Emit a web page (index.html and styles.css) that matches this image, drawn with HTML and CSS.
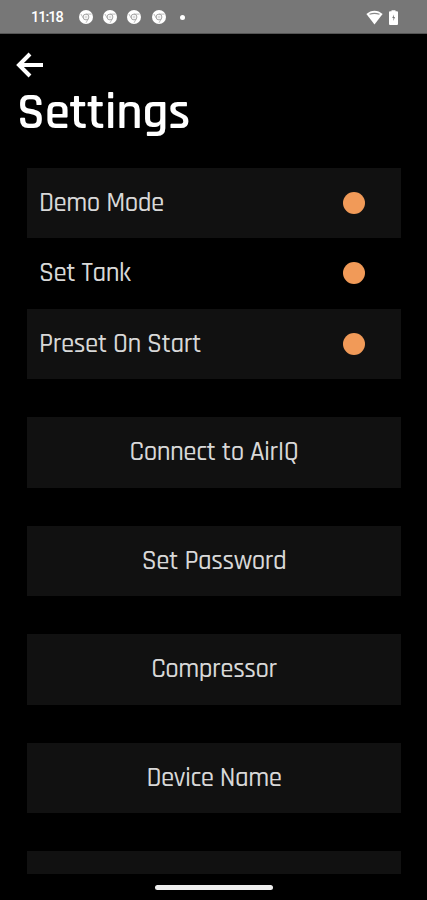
FILE: index.html
```
<!DOCTYPE html>
<html lang="en">
<head>
    <meta charset="UTF-8">
    <title>Settings</title>
    <meta name="viewport" content="width=device-width, initial-scale=1.0">
    <link rel="stylesheet" href="styles.css">
</head>
<body>
    <svg class="defs" width="0" height="0" aria-hidden="true">
        <symbol id="chrome" viewBox="0 0 14 14">
            <circle cx="7" cy="7" r="7" fill="#fff"/>
            <circle cx="7" cy="7" r="2.9" fill="none" stroke="#999" stroke-width=".9"/>
            <path d="M7 4.1h5.5M4.5 8.5L1.9 4M9.5 8.5L7 12.8" fill="none" stroke="#aaa" stroke-width=".8"/>
            <circle cx="7" cy="7" r="1.5" fill="#ddd"/>
        </symbol>
    </svg>
    <div class="status-bar">
        <span class="time">11:18</span>
        <div class="notifications">
            <svg width="14" height="14"><use href="#chrome"/></svg>
            <svg width="14" height="14"><use href="#chrome"/></svg>
            <svg width="14" height="14"><use href="#chrome"/></svg>
            <svg width="14" height="14"><use href="#chrome"/></svg>
            <span class="more"></span>
        </div>
        <div class="system-icons">
            <svg width="17" height="15" viewBox="0 0 17 15">
                <path d="M.4 4C5 -.5 12 -.5 16.6 4L8.5 14.5z" fill="#fff"/>
                <path d="M3.5 4.3Q8.5 2.5 13.5 4.3" fill="none" stroke="#888" stroke-width="1.1"/>
            </svg>
            <svg width="9" height="15" viewBox="0 0 9 15">
                <path d="M2.5 1.3V.3h4v1H8q1 0 1 1V14q0 1-1 1H1q-1 0-1-1V2.3q0-1 1-1z" fill="#fff"/>
                <path d="M5 4.5L3.2 8h1.2v3L6 7H4.8z" fill="#777"/>
            </svg>
        </div>
    </div>

    <header class="header">
        <button class="back" aria-label="Back">
            <svg width="28" height="26" viewBox="0 0 28 26" fill="none" stroke="#fff" stroke-width="4">
                <path d="M27 13H3M14 2L3 13l11 11"/>
            </svg>
        </button>
        <h1>Settings</h1>
    </header>

    <main class="content">
        <div class="options">
            <div class="option"><span>Demo Mode</span><span class="dot"></span></div>
            <div class="option"><span>Set Tank</span><span class="dot"></span></div>
            <div class="option"><span>Preset On Start</span><span class="dot"></span></div>
        </div>
        <button class="action">Connect to AirIQ</button>
        <button class="action">Set Password</button>
        <button class="action">Compressor</button>
        <button class="action">Device Name</button>
        <button class="action" aria-label="More"></button>
    </main>

    <footer class="nav-bar"><span class="handle"></span></footer>
</body>
</html>
```
FILE: styles.css
```
:root {
    --bg-color: #000;
    --panel-color: #111;
    --text-color: #d8d8d8;
    --accent-color: #f19a58;
}

* {
    box-sizing: border-box;
}

body {
    margin: 0;
    height: 900px;
    display: flex;
    flex-direction: column;
    overflow: hidden;
    background-color: var(--bg-color);
    color: var(--text-color);
    font-family: Rajdhani, Roboto, sans-serif;
}

.defs {
    display: none;
}

.status-bar {
    flex: none;
    display: flex;
    align-items: center;
    height: 34px;
    padding: 1px 29px 0 31px;
    background-color: #777;
    border-bottom: 1px solid #555;
    color: #fff;
}

.time {
    width: 48px;
    font-family: Roboto, sans-serif;
    font-size: 14.5px;
    font-weight: 500;
    letter-spacing: -1px;
}

.notifications {
    display: flex;
    align-items: center;
    gap: 10.2px;
}

.more {
    width: 5px;
    height: 5px;
    margin-left: 4px;
    border-radius: 50%;
    background-color: #fff;
}

.system-icons {
    display: flex;
    gap: 6px;
    margin-left: auto;
}

.header {
    flex: none;
    height: 133.5px;
    padding: 18px 18px 0 16px;
}

button {
    border: none;
    font-family: inherit;
    color: inherit;
}

.back {
    display: block;
    padding: 0;
    background: none;
}

.back svg {
    display: block;
}

h1 {
    margin: 8px 0 0 1px;
    color: #fff;
    font-size: 51px;
    line-height: 56px;
    font-weight: 600;
    letter-spacing: -0.3px;
}

.content {
    flex: none;
    display: flex;
    flex-direction: column;
    gap: 38px;
    height: 706.5px;
    padding: 0 26px 0 27px;
    overflow: hidden;
}

.option,
.action {
    flex: none;
    height: 70.5px;
    font-size: 27px;
    font-weight: 500;
    letter-spacing: -0.5px;
}

.option {
    display: flex;
    align-items: center;
    justify-content: space-between;
    padding: 0 36px 0 12px;
}

.option:nth-child(odd),
.action {
    background-color: var(--panel-color);
}

.dot {
    width: 22px;
    height: 22px;
    border-radius: 50%;
    background-color: var(--accent-color);
}

.action {
    width: 100%;
    padding: 0;
    text-align: center;
}

.nav-bar {
    flex: none;
    display: flex;
    justify-content: center;
    padding: 11px 0 0;
}

.handle {
    width: 118px;
    height: 5px;
    border-radius: 3px;
    background-color: #eee;
}
```
